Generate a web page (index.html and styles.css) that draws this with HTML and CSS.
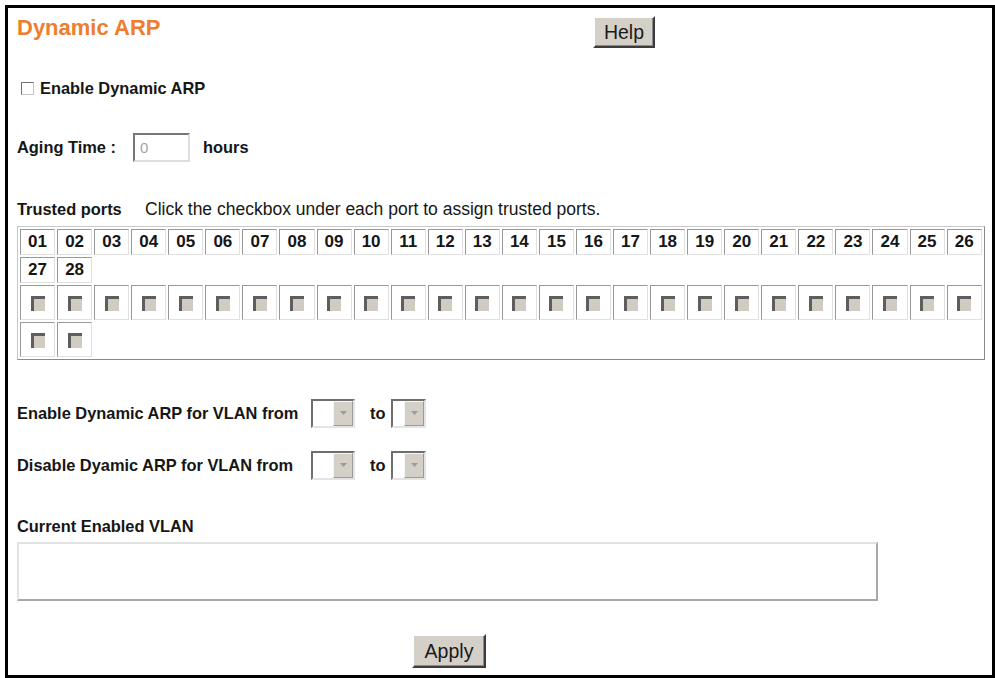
FILE: index.html
```html
<!DOCTYPE html>
<html lang="en">
<head>
  <meta charset="UTF-8" />
  <title>Dynamic ARP</title>
  <link rel="stylesheet" href="styles.css">
</head>
<body>
  <div class="caption"><div class="caption-text"><span class="fig-no">Figure 71</span>Dynamic ARP</div></div>

  <div class="frame">
    <div class="head">
      <h1 class="title">Dynamic ARP</h1>
      <button class="btn help">Help</button>
    </div>

    <div class="row enable-row"><span class="check"></span>Enable Dynamic ARP</div>

    <div class="row aging-row">
      <span class="aging-lbl">Aging Time :</span>
      <span class="field">0</span>
      <span>hours</span>
    </div>

    <div class="trusted"><b class="trusted-lbl">Trusted ports</b><span class="hint">Click the checkbox under each port to assign trusted ports.</span></div>

    <table class="ports">
      <tr class="nums">
        <td>01</td><td>02</td><td>03</td><td>04</td><td>05</td><td>06</td><td>07</td><td>08</td><td>09</td><td>10</td><td>11</td><td>12</td><td>13</td>
        <td>14</td><td>15</td><td>16</td><td>17</td><td>18</td><td>19</td><td>20</td><td>21</td><td>22</td><td>23</td><td>24</td><td>25</td><td>26</td>
      </tr>
      <tr class="nums">
        <td>27</td><td>28</td><td class="blank" colspan="24"></td>
      </tr>
      <tr class="boxes">
        <td><span class="tick"></span></td><td><span class="tick"></span></td><td><span class="tick"></span></td><td><span class="tick"></span></td>
        <td><span class="tick"></span></td><td><span class="tick"></span></td><td><span class="tick"></span></td><td><span class="tick"></span></td>
        <td><span class="tick"></span></td><td><span class="tick"></span></td><td><span class="tick"></span></td><td><span class="tick"></span></td>
        <td><span class="tick"></span></td><td><span class="tick"></span></td><td><span class="tick"></span></td><td><span class="tick"></span></td>
        <td><span class="tick"></span></td><td><span class="tick"></span></td><td><span class="tick"></span></td><td><span class="tick"></span></td>
        <td><span class="tick"></span></td><td><span class="tick"></span></td><td><span class="tick"></span></td><td><span class="tick"></span></td>
        <td><span class="tick"></span></td><td><span class="tick"></span></td>
      </tr>
      <tr class="boxes">
        <td><span class="tick"></span></td><td><span class="tick"></span></td><td class="blank" colspan="24"></td>
      </tr>
    </table>

    <div class="row vlan-row first">
      <span class="vlan-lbl">Enable Dynamic ARP for VLAN from</span>
      <span class="pick wide"><span class="pick-val"></span><span class="pick-btn"><svg width="9" height="5" viewBox="0 0 9 5"><path d="M1 0h7L4.5 4z" fill="#9c9c9c"/></svg></span></span>
      <span class="to">to</span>
      <span class="pick"><span class="pick-val"></span><span class="pick-btn"><svg width="9" height="5" viewBox="0 0 9 5"><path d="M1 0h7L4.5 4z" fill="#9c9c9c"/></svg></span></span>
    </div>

    <div class="row vlan-row second">
      <span class="vlan-lbl">Disable Dyamic ARP for VLAN from</span>
      <span class="pick wide"><span class="pick-val"></span><span class="pick-btn"><svg width="9" height="5" viewBox="0 0 9 5"><path d="M1 0h7L4.5 4z" fill="#9c9c9c"/></svg></span></span>
      <span class="to">to</span>
      <span class="pick"><span class="pick-val"></span><span class="pick-btn"><svg width="9" height="5" viewBox="0 0 9 5"><path d="M1 0h7L4.5 4z" fill="#9c9c9c"/></svg></span></span>
    </div>

    <div class="current">Current Enabled VLAN</div>
    <div class="vlan-box"></div>

    <div class="apply-wrap"><button class="btn apply">Apply</button></div>
  </div>
</body>
</html>
```

FILE: styles.css
```css
* { box-sizing: border-box; }
body { margin: 0; font-family: "Liberation Sans", Arial, sans-serif; color: #161616; background: #fff; overflow: hidden; }

/* figure caption, cut off by the top edge */
.caption { height: 5px; overflow: hidden; font: bold 14px/20px "Liberation Sans", Arial, sans-serif; }
.caption-text { margin-top: -18px; white-space: nowrap; }
.fig-no { display: inline-block; width: 153px; }

.frame {
  width: 990px; height: 673px; margin-left: 5px;
  border: 3px solid #000; padding-left: 9px;
}

.head { display: flex; align-items: flex-start; margin-top: 8px; height: 32px; }
.title { margin: 0; width: 576px; font-size: 22px; line-height: 24px; font-weight: bold; color: #ef7d2e; }

.btn {
  font-family: "Liberation Sans", Arial, sans-serif; font-size: 19.5px; color: #1a1a1a;
  background: #d4d0c8; padding: 0; cursor: pointer;
  border: 2px solid; border-color: #fff #3c3c3c #3c3c3c #fff;
  box-shadow: inset -1px -1px #8a8a8a;
}
.help { width: 62px; height: 32px; }
.apply { width: 74px; height: 34px; margin-left: 3px; }

.row { display: flex; align-items: center; font-weight: bold; font-size: 16.4px; }

.enable-row { height: 26px; margin-top: 27px; }
.check {
  width: 13px; height: 13px; margin: 0 6px 0 4px; background: #fff;
  border: 1px solid; border-color: #707070 #c4c4c4 #c4c4c4 #707070;
}

.aging-row { height: 29px; margin-top: 32px; }
.aging-lbl { width: 116px; }
.field {
  display: flex; align-items: center; width: 57px; height: 29px; margin-right: 13px; padding-left: 5px;
  border: 2px solid; border-color: #777 #dedede #dedede #777;
  font-weight: normal; font-size: 15px; color: #a4a4a4;
}

.trusted { display: flex; align-items: center; height: 20px; margin-top: 37px; }
.trusted-lbl { width: 128px; font-size: 16.4px; }
.hint { font-size: 17.5px; }

.ports {
  margin-top: 7px; width: 968px; table-layout: fixed;
  border-collapse: separate; border-spacing: 2px;
  border: 1px solid; border-color: #c8c8c8 #8a8a8a #8a8a8a #c8c8c8;
}
.ports td {
  padding: 0; text-align: center;
  border: 1px solid; border-color: #989898 #e0e0e0 #e0e0e0 #989898;
}
.nums td { height: 26px; font-weight: bold; font-size: 17px; }
.boxes td { height: 35px; }
.ports td.blank { border: none; }
.tick {
  display: inline-block; vertical-align: middle; width: 14px; height: 15px;
  background: #d0ccc4; border-top: 3px solid #5e5e5e; border-left: 3px solid #5e5e5e;
}

.vlan-row { height: 29px; }
.vlan-row.first { margin-top: 39px; }
.vlan-row.second { margin-top: 23px; }
.vlan-lbl { width: 294px; }
.to { margin: 0 6px 0 15px; }

.pick {
  display: flex; width: 35px; height: 29px; background: #fff;
  border: 2px solid; border-color: #6e6e6e #e4e4e4 #e4e4e4 #6e6e6e;
}
.pick.wide { width: 44px; }
.pick-val { flex: 1; }
.pick-btn {
  display: flex; align-items: center; justify-content: center; width: 20px;
  background: #d4d0c8; border: 1px solid; border-color: #f6f6f6 #9a9a9a #9a9a9a #f6f6f6;
}

.current { margin-top: 36px; height: 20px; line-height: 20px; font-weight: bold; font-size: 16.4px; }
.vlan-box {
  margin-top: 6px; width: 861px; height: 59px;
  border: 2px solid; border-color: #e2e2e2 #a8a8a8 #a8a8a8 #e2e2e2;
}
.apply-wrap { width: 861px; margin-top: 33px; text-align: center; }
```
